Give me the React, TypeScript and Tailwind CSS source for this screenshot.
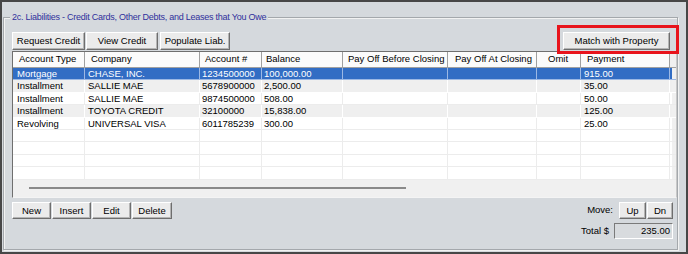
import React from "react";

const font = "font-['Liberation_Sans',Arial,sans-serif]";

const btn =
  "h-[18px] flex items-center justify-center bg-[#ebebeb] border border-t-white border-l-white border-r-[#6e6e6e] border-b-[#6e6e6e] shadow-[inset_-1px_-1px_0_#b4b4b4] text-black leading-none";

const columns = [
  { title: "Account Type", w: "w-[72px]", hp: "pl-[6px]", dp: "pl-[4px]" },
  { title: "Company", w: "w-[115px]", hp: "pl-[6px]", dp: "pl-[3px]" },
  { title: "Account #", w: "w-[62px]", hp: "pl-[5px]", dp: "pl-[2px]" },
  { title: "Balance", w: "w-[81px]", hp: "pl-[4px]", dp: "pl-[2px]" },
  { title: "Pay Off Before Closing", w: "w-[105px]", hp: "pl-[5px]", dp: "pl-[2px]" },
  { title: "Pay Off At Closing", w: "w-[89px]", hp: "pl-[7px]", dp: "pl-[2px]" },
  { title: "Omit", w: "w-[44px]", hp: "pl-[11px]", dp: "pl-[2px]" },
  { title: "Payment", w: "w-[89px]", hp: "pl-[6px]", dp: "pl-[3px]" },
];

const rows = [
  ["Mortgage", "CHASE, INC.", "1234500000", "100,000.00", "", "", "", "915.00"],
  ["Installment", "SALLIE MAE", "5678900000", "2,500.00", "", "", "", "35.00"],
  ["Installment", "SALLIE MAE", "9874500000", "508.00", "", "", "", "50.00"],
  ["Installment", "TOYOTA CREDIT", "32100000", "15,838.00", "", "", "", "125.00"],
  ["Revolving", "UNIVERSAL VISA", "6011785239", "300.00", "", "", "", "25.00"],
  ["", "", "", "", "", "", "", ""],
  ["", "", "", "", "", "", "", ""],
  ["", "", "", "", "", "", "", ""],
  ["", "", "", "", "", "", "", ""],
];

function Grid() {
  return (
    <div className="w-[665px] h-[147px] flex flex-col border border-t-[#6f6f6f] border-l-[#6f6f6f] border-r-[#c8c8c8] border-b-[#f4f4f4] bg-[#f0f0f0]">
      <div className="flex h-[16px] bg-[#fbfbfb] border-b border-[#a0a0a0]">
        {columns.map((c) => (
          <div
            key={c.title}
            className={`${c.w} ${c.hp} shrink-0 h-full flex items-center border-r border-[#a0a0a0] whitespace-nowrap overflow-hidden`}
          >
            {c.title}
          </div>
        ))}
        <div className="flex-1 bg-[#f0f0f0]" />
      </div>
      {rows.map((r, i) => {
        const selected = i === 0;
        const shade = i === 1 || i === 3;
        const rowCls = selected
          ? "bg-[#326dc4] text-white"
          : shade
          ? "bg-[#efefef] text-black"
          : "bg-white text-black";
        const line = selected ? "border-[#9cb8e4]" : shade ? "border-white" : "border-[#ececec]";
        return (
          <div key={i} className={`flex h-[12.4px] ${rowCls} border-b ${line}`}>
            {columns.map((c, j) => (
              <div
                key={j}
                className={`${c.w} ${c.dp} shrink-0 h-full flex items-center border-r ${line} whitespace-nowrap overflow-hidden leading-none`}
              >
                {r[j]}
              </div>
            ))}
            <div className="w-[2px] shrink-0" />
            <div className="flex-1 bg-[#f0f0f0]" />
          </div>
        );
      })}
      <div className="flex-1 flex items-center pl-[16px]">
        <div className="w-[377px] h-[2px] bg-[#8a8a8a]" />
      </div>
    </div>
  );
}

export default function App() {
  return (
    <div
      className={`${font} relative w-[688px] h-[254px] bg-[#d5d9dd] border-2 border-[#474747] text-[9.5px] text-black overflow-hidden`}
    >
      <div className="relative ml-[1px] mt-[15px] w-[675px] h-[233px] border border-[#a4a8ac] shadow-[inset_1px_1px_0_#f2f2f2,1px_1px_0_#f2f2f2]">
        <div className="absolute -top-[7px] left-[6px] px-[2px] bg-[#d5d9dd] text-[#30309c] leading-[12px] text-[9px] tracking-[-0.25px]">
          2c. Liabilities - Credit Cards, Other Debts, and Leases that You Owe
        </div>

        <div className="pl-[8px] pt-[14px] flex flex-col">
          <div className="flex items-center">
            <button className={`${btn} w-[73px]`}>Request Credit</button>
            <button className={`${btn} w-[72px] ml-[1px]`}>View Credit</button>
            <button className={`${btn} w-[70px] ml-[2px]`}>Populate Liab.</button>
            <div className="flex-1" />
            <button className={`${btn} w-[107px] mr-[7px]`}>Match with Property</button>
          </div>

          <div className="mt-[1px]">
            <Grid />
          </div>

          <div className="flex mt-[4px]">
            <div className="flex h-[17px]">
              <button className={`${btn} !h-[17px] w-[39px]`}>New</button>
              <button className={`${btn} !h-[17px] w-[39px] ml-[1px]`}>Insert</button>
              <button className={`${btn} !h-[17px] w-[39px] ml-[1px]`}>Edit</button>
              <button className={`${btn} !h-[17px] w-[40px] ml-[1px]`}>Delete</button>
            </div>
            <div className="flex-1" />
            <div className="flex flex-col items-end mr-[4px]">
              <div className="flex items-center h-[17px]">
                <span className="mr-[6px]">Move:</span>
                <button className={`${btn} !h-[17px] w-[27px]`}>Up</button>
                <button className={`${btn} !h-[17px] w-[26px] ml-[1px]`}>Dn</button>
              </div>
              <div className="flex items-center mt-[4px] h-[16px]">
                <span className="mr-[5px]">Total $</span>
                <div className="w-[59px] h-[16px] flex items-center justify-end pr-[2px] bg-[#d8dbde] border border-t-[#7a7a7a] border-l-[#7a7a7a] border-r-white border-b-white">
                  235.00
                </div>
              </div>
            </div>
          </div>
        </div>
      </div>

      <div className="absolute left-[555px] top-[23px] w-[122px] h-[29px] border-[3px] border-[#e8141c]" />
    </div>
  );
}
